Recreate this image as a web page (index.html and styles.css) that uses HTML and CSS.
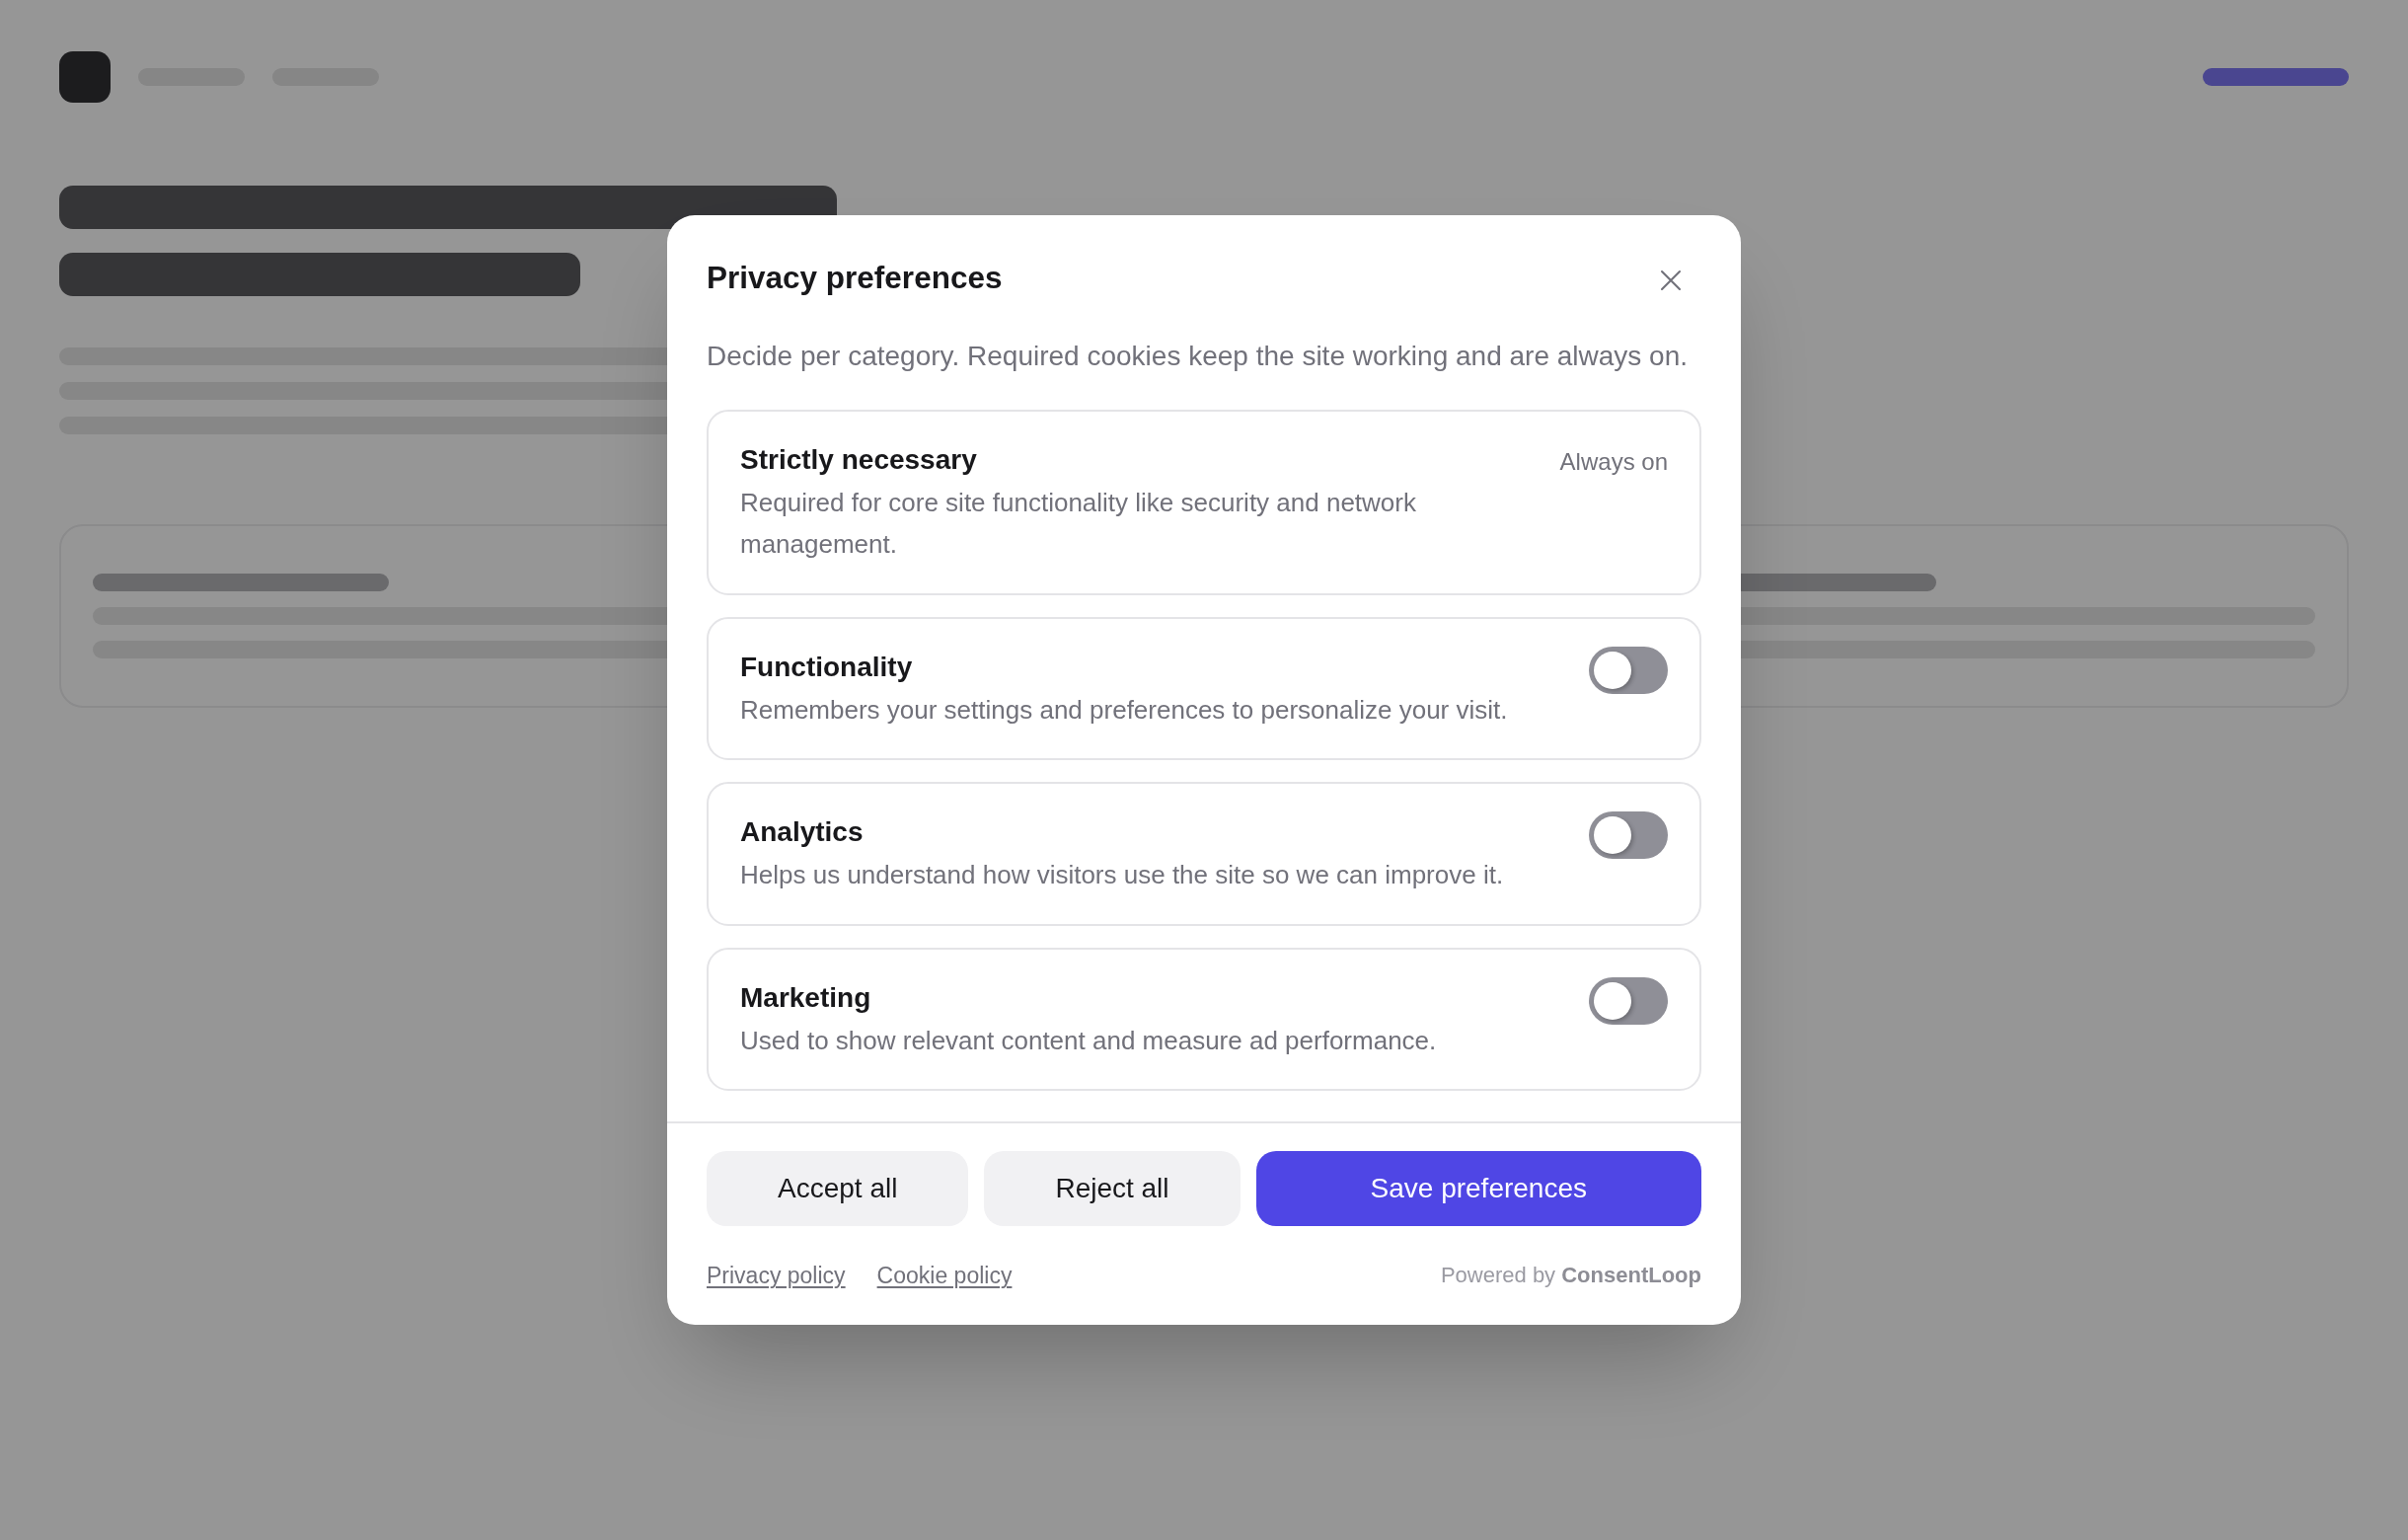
FILE: index.html
```html
<!DOCTYPE html>
<html lang="en">
<head>
<meta charset="utf-8">
<title>Privacy preferences</title>
<link rel="stylesheet" href="styles.css">
</head>
<body>
<div class="page">
  <header class="topbar">
    <div class="brand"></div>
    <nav class="nav">
      <span class="nav-pill"></span>
      <span class="nav-pill"></span>
    </nav>
    <span class="cta-pill"></span>
  </header>

  <section class="hero">
    <div class="hero-title hero-title-1"></div>
    <div class="hero-title hero-title-2"></div>
    <div class="hero-lines">
      <div class="hero-line hero-line-1"></div>
      <div class="hero-line hero-line-2"></div>
      <div class="hero-line hero-line-3"></div>
    </div>
  </section>

  <section class="tiles">
    <div class="tile">
      <div class="tile-bar"></div>
      <div class="tile-line"></div>
      <div class="tile-line"></div>
    </div>
    <div class="tile">
      <div class="tile-bar"></div>
      <div class="tile-line"></div>
      <div class="tile-line"></div>
    </div>
    <div class="tile">
      <div class="tile-bar"></div>
      <div class="tile-line"></div>
      <div class="tile-line"></div>
    </div>
  </section>
</div>

<div class="overlay">
  <div class="modal" role="dialog" aria-labelledby="modal-title">
    <div class="modal-body">
      <div class="modal-header">
        <h2 id="modal-title" class="modal-title">Privacy preferences</h2>
        <button class="close-btn" type="button" aria-label="Close">
          <svg viewBox="0 0 24 24" width="36" height="36" fill="none" stroke="currentColor" stroke-width="1.4" stroke-linecap="round">
            <path d="M6 6 18 18M18 6 6 18"/>
          </svg>
        </button>
      </div>
      <p class="modal-desc">Decide per category. Required cookies keep the site working and are always on.</p>

      <div class="categories">
        <div class="category">
          <div class="category-text">
            <h3 class="category-title">Strictly necessary</h3>
            <p class="category-desc">Required for core site functionality like security and network management.</p>
          </div>
          <span class="always-on">Always on</span>
        </div>

        <div class="category">
          <div class="category-text">
            <h3 class="category-title">Functionality</h3>
            <p class="category-desc">Remembers your settings and preferences to personalize your visit.</p>
          </div>
          <span class="toggle" role="switch" aria-checked="false"><span class="knob"></span></span>
        </div>

        <div class="category">
          <div class="category-text">
            <h3 class="category-title">Analytics</h3>
            <p class="category-desc">Helps us understand how visitors use the site so we can improve it.</p>
          </div>
          <span class="toggle" role="switch" aria-checked="false"><span class="knob"></span></span>
        </div>

        <div class="category">
          <div class="category-text">
            <h3 class="category-title">Marketing</h3>
            <p class="category-desc">Used to show relevant content and measure ad performance.</p>
          </div>
          <span class="toggle" role="switch" aria-checked="false"><span class="knob"></span></span>
        </div>
      </div>
    </div>

    <div class="modal-footer">
      <div class="actions">
        <button class="btn btn-secondary" type="button">Accept all</button>
        <button class="btn btn-secondary" type="button">Reject all</button>
        <button class="btn btn-primary" type="button">Save preferences</button>
      </div>
      <div class="footer-meta">
        <div class="policy-links">
          <a href="#" class="policy-link">Privacy policy</a>
          <a href="#" class="policy-link">Cookie policy</a>
        </div>
        <span class="powered">Powered by <strong>ConsentLoop</strong></span>
      </div>
    </div>
  </div>
</div>
</body>
</html>
```

FILE: styles.css
```css
* {
  box-sizing: border-box;
}

html, body {
  margin: 0;
  padding: 0;
}

body {
  width: 2440px;
  height: 1560px;
  overflow: hidden;
  background: #ffffff;
  font-family: "Liberation Sans", Arial, Helvetica, sans-serif;
  color: #18181b;
}

/* ---------- Background page ---------- */
.page {
  padding: 52px 60px;
}

.topbar {
  display: flex;
  align-items: center;
  height: 52px;
}

.brand {
  width: 52px;
  height: 52px;
  border-radius: 14px;
  background: #303034;
}

.nav {
  display: flex;
  gap: 28px;
  margin-left: 28px;
}

.nav-pill {
  display: block;
  width: 108px;
  height: 18px;
  border-radius: 9px;
  background: #e4e4e4;
}

.cta-pill {
  display: block;
  margin-left: auto;
  width: 148px;
  height: 18px;
  border-radius: 9px;
  background: #7e77f5;
}

.hero {
  margin-top: 84px;
}

.hero-title {
  height: 44px;
  border-radius: 14px;
  background: #5a5a5e;
}

.hero-title-1 {
  width: 788px;
}

.hero-title-2 {
  width: 528px;
  margin-top: 24px;
}

.hero-lines {
  display: flex;
  flex-direction: column;
  gap: 17px;
  margin-top: 52px;
}

.hero-line {
  height: 18px;
  border-radius: 9px;
  background: #e6e6e6;
}

.hero-line-1 { width: 1300px; }
.hero-line-2 { width: 1250px; }
.hero-line-3 { width: 1120px; }

.tiles {
  display: grid;
  grid-template-columns: repeat(3, 1fr);
  gap: 32px;
  margin-top: 91px;
}

.tile {
  display: flex;
  flex-direction: column;
  gap: 16px;
  padding: 48px 32px;
  border: 2px solid #ececee;
  border-radius: 24px;
}

.tile-bar {
  width: 300px;
  height: 18px;
  border-radius: 9px;
  background: #b4b4b8;
}

.tile-line {
  height: 18px;
  border-radius: 9px;
  background: #e6e6e6;
}

/* ---------- Overlay + modal ---------- */
.overlay {
  position: fixed;
  inset: 0;
  display: flex;
  align-items: center;
  justify-content: center;
  background: rgba(0, 0, 0, 0.41);
}

.modal {
  width: 1088px;
  background: #ffffff;
  border-radius: 28px;
  box-shadow: 0 50px 100px -24px rgba(0, 0, 0, 0.28);
  overflow: hidden;
}

.modal-body {
  padding: 36px 40px 31px;
}

.modal-header {
  display: flex;
  align-items: center;
  justify-content: space-between;
  height: 60px;
}

.modal-title {
  margin: 0;
  padding-bottom: 5px;
  font-size: 31.5px;
  line-height: 40px;
  font-weight: 700;
  color: #18181b;
}

.close-btn {
  display: flex;
  align-items: center;
  justify-content: center;
  width: 60px;
  height: 60px;
  margin-right: 1px;
  padding: 0;
  border: 0;
  background: transparent;
  color: #71717a;
  cursor: pointer;
}

.modal-desc {
  margin: 25px 0 0;
  font-size: 28px;
  line-height: 1.6;
  color: #71717a;
}

.categories {
  display: flex;
  flex-direction: column;
  gap: 22px;
  margin-top: 32px;
}

.category {
  display: flex;
  align-items: flex-start;
  justify-content: space-between;
  gap: 48px;
  padding: 28px 32px;
  border: 2px solid #e4e4e7;
  border-radius: 22px;
}

.category-text {
  flex: 1;
  min-width: 0;
}

.category-title {
  margin: 0;
  font-size: 28px;
  line-height: 42px;
  font-weight: 700;
  color: #18181b;
}

.category-desc {
  margin: 2px 0 0;
  font-size: 26px;
  line-height: 1.6;
  color: #71717a;
}

.always-on {
  flex-shrink: 0;
  font-size: 24px;
  line-height: 46px;
  color: #71717a;
}

.toggle {
  flex-shrink: 0;
  display: flex;
  align-items: center;
  width: 80px;
  height: 48px;
  padding: 0 5px;
  border-radius: 24px;
  background: #8f8f97;
}

.knob {
  display: block;
  width: 38px;
  height: 38px;
  border-radius: 50%;
  background: #ffffff;
  box-shadow: 2px 2px 4px rgba(0, 0, 0, 0.25);
}

.modal-footer {
  padding: 28px 40px 33px;
  border-top: 2px solid #e4e4e7;
}

.actions {
  display: flex;
  gap: 16px;
}

.btn {
  height: 76px;
  padding: 0 72px;
  border: 0;
  border-radius: 20px;
  font-family: inherit;
  font-size: 28px;
  line-height: 36px;
  cursor: pointer;
  white-space: nowrap;
}

.btn-secondary {
  background: #f1f1f3;
  color: #18181b;
}

.btn-primary {
  flex: 1;
  padding: 0 24px;
  background: #4f46e5;
  color: #ffffff;
}

.footer-meta {
  display: flex;
  align-items: center;
  justify-content: space-between;
  margin-top: 33px;
  height: 34px;
}

.policy-links {
  display: flex;
  gap: 32px;
}

.policy-link {
  font-size: 23px;
  line-height: 34px;
  color: #71717a;
  text-decoration: underline;
  text-decoration-thickness: 2px;
  text-underline-offset: 3px;
}

.powered {
  font-size: 22px;
  line-height: 34px;
  color: #9a9aa2;
}

.powered strong {
  font-weight: 700;
  color: #8d8d95;
}
```
